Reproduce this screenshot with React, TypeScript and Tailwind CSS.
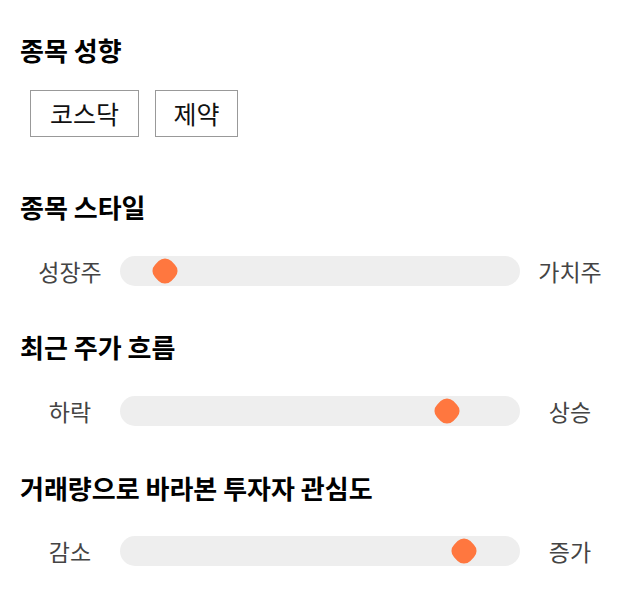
import React from "react";

const font = { fontFamily: '"Noto Sans CJK KR", "Noto Sans", sans-serif' };

function Slider({ left, right, pct }: { left: string; right: string; pct: number }) {
  return (
    <div className="flex items-center h-[30px]">
      <div className="w-[100px] text-center text-[23px] text-[#444] leading-[30px]">{left}</div>
      <div className="relative w-[400px] h-[30px] rounded-[15px] bg-[#eeeeee]">
        <div
          className="absolute top-1/2 w-[23px] h-[23px] bg-[#ff773f] rounded-[9px] rotate-45 -translate-x-1/2 -translate-y-1/2"
          style={{ left: `${pct}%` }}
        />
      </div>
      <div className="w-[100px] text-center text-[23px] text-[#444] leading-[30px]">{right}</div>
    </div>
  );
}

export default function App() {
  return (
    <div className="w-[640px] h-[606px] bg-white px-[20px] pt-[34px]" style={font}>
      <h2 className="text-[26px] font-bold leading-[32px] text-black">종목 성향</h2>
      <div className="flex gap-[16px] ml-[10px] mt-[24px]">
        <div className="h-[47px] w-[109px] border border-[#999] flex items-center justify-center text-[25px] text-[#111]">코스닥</div>
        <div className="h-[47px] w-[83px] border border-[#999] flex items-center justify-center text-[25px] text-[#111]">제약</div>
      </div>
      <h2 className="text-[26px] font-bold leading-[32px] text-black mt-[54px]">종목 스타일</h2>
      <div className="mt-[33px]">
        <Slider left="성장주" right="가치주" pct={11.25} />
      </div>
      <h2 className="text-[26px] font-bold leading-[32px] text-black mt-[45px]">최근 주가 흐름</h2>
      <div className="mt-[33px]">
        <Slider left="하락" right="상승" pct={81.75} />
      </div>
      <h2 className="text-[26px] font-bold leading-[32px] text-black mt-[46px]">거래량으로 바라본 투자자 관심도</h2>
      <div className="mt-[32px]">
        <Slider left="감소" right="증가" pct={86} />
      </div>
    </div>
  );
}
